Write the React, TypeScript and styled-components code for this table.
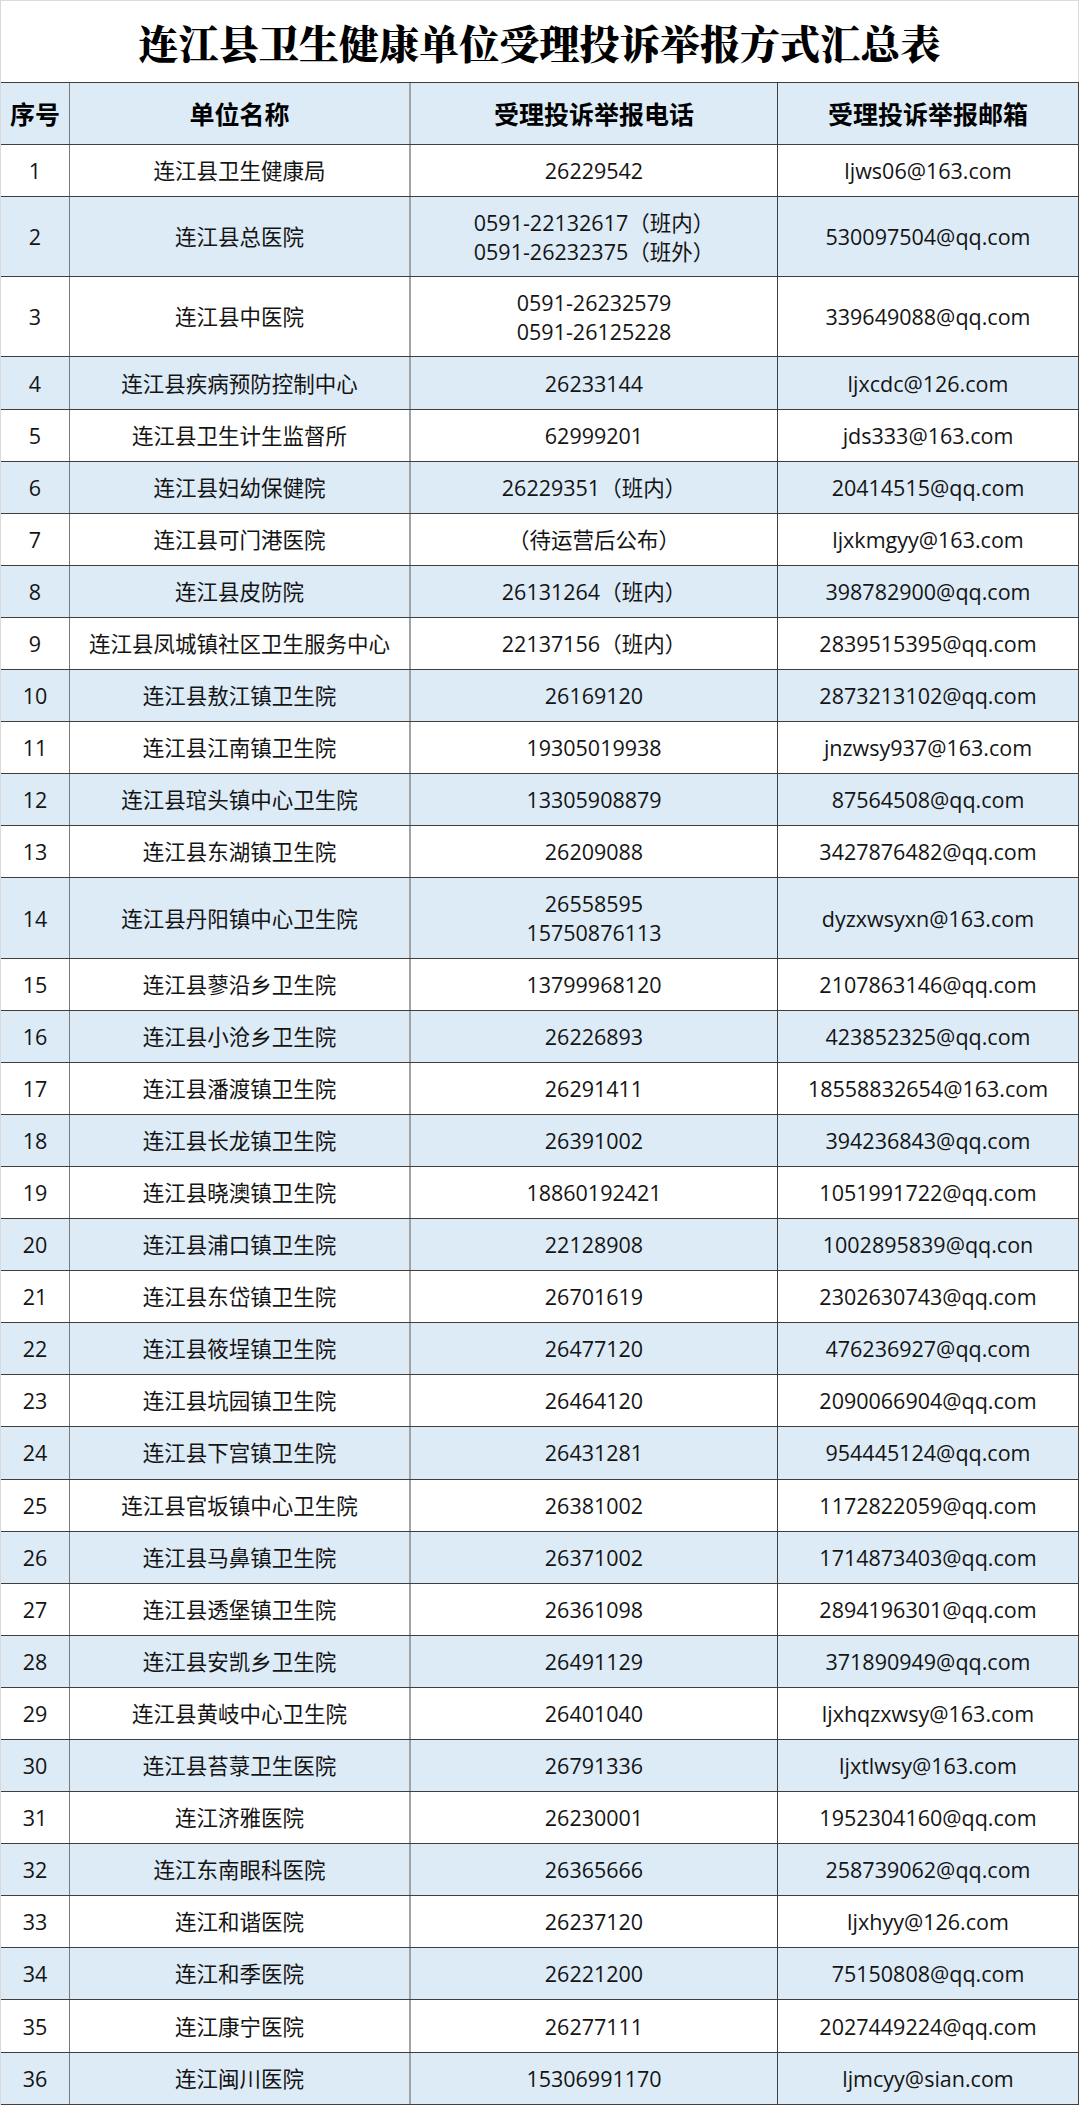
import React from "react";
import styled, { createGlobalStyle } from "styled-components";

const GlobalStyle = createGlobalStyle`
  html, body {
    margin: 0;
    padding: 0;
    background: #ffffff;
  }
  body {
    font-family: "Open Sans", "Noto Sans CJK SC", sans-serif;
  }
`;

type Entry = {
  no: number;
  name: string;
  phones: string[];
  email: string;
};

const data: Entry[] = [
  { no: 1, name: "连江县卫生健康局", phones: ["26229542"], email: "ljws06@163.com" },
  { no: 2, name: "连江县总医院", phones: ["0591-22132617（班内）", "0591-26232375（班外）"], email: "530097504@qq.com" },
  { no: 3, name: "连江县中医院", phones: ["0591-26232579", "0591-26125228"], email: "339649088@qq.com" },
  { no: 4, name: "连江县疾病预防控制中心", phones: ["26233144"], email: "ljxcdc@126.com" },
  { no: 5, name: "连江县卫生计生监督所", phones: ["62999201"], email: "jds333@163.com" },
  { no: 6, name: "连江县妇幼保健院", phones: ["26229351（班内）"], email: "20414515@qq.com" },
  { no: 7, name: "连江县可门港医院", phones: ["（待运营后公布）"], email: "ljxkmgyy@163.com" },
  { no: 8, name: "连江县皮防院", phones: ["26131264（班内）"], email: "398782900@qq.com" },
  { no: 9, name: "连江县凤城镇社区卫生服务中心", phones: ["22137156（班内）"], email: "2839515395@qq.com" },
  { no: 10, name: "连江县敖江镇卫生院", phones: ["26169120"], email: "2873213102@qq.com" },
  { no: 11, name: "连江县江南镇卫生院", phones: ["19305019938"], email: "jnzwsy937@163.com" },
  { no: 12, name: "连江县琯头镇中心卫生院", phones: ["13305908879"], email: "87564508@qq.com" },
  { no: 13, name: "连江县东湖镇卫生院", phones: ["26209088"], email: "3427876482@qq.com" },
  { no: 14, name: "连江县丹阳镇中心卫生院", phones: ["26558595", "15750876113"], email: "dyzxwsyxn@163.com" },
  { no: 15, name: "连江县蓼沿乡卫生院", phones: ["13799968120"], email: "2107863146@qq.com" },
  { no: 16, name: "连江县小沧乡卫生院", phones: ["26226893"], email: "423852325@qq.com" },
  { no: 17, name: "连江县潘渡镇卫生院", phones: ["26291411"], email: "18558832654@163.com" },
  { no: 18, name: "连江县长龙镇卫生院", phones: ["26391002"], email: "394236843@qq.com" },
  { no: 19, name: "连江县晓澳镇卫生院", phones: ["18860192421"], email: "1051991722@qq.com" },
  { no: 20, name: "连江县浦口镇卫生院", phones: ["22128908"], email: "1002895839@qq.con" },
  { no: 21, name: "连江县东岱镇卫生院", phones: ["26701619"], email: "2302630743@qq.com" },
  { no: 22, name: "连江县筱埕镇卫生院", phones: ["26477120"], email: "476236927@qq.com" },
  { no: 23, name: "连江县坑园镇卫生院", phones: ["26464120"], email: "2090066904@qq.com" },
  { no: 24, name: "连江县下宫镇卫生院", phones: ["26431281"], email: "954445124@qq.com" },
  { no: 25, name: "连江县官坂镇中心卫生院", phones: ["26381002"], email: "1172822059@qq.com" },
  { no: 26, name: "连江县马鼻镇卫生院", phones: ["26371002"], email: "1714873403@qq.com" },
  { no: 27, name: "连江县透堡镇卫生院", phones: ["26361098"], email: "2894196301@qq.com" },
  { no: 28, name: "连江县安凯乡卫生院", phones: ["26491129"], email: "371890949@qq.com" },
  { no: 29, name: "连江县黄岐中心卫生院", phones: ["26401040"], email: "ljxhqzxwsy@163.com" },
  { no: 30, name: "连江县苔菉卫生医院", phones: ["26791336"], email: "ljxtlwsy@163.com" },
  { no: 31, name: "连江济雅医院", phones: ["26230001"], email: "1952304160@qq.com" },
  { no: 32, name: "连江东南眼科医院", phones: ["26365666"], email: "258739062@qq.com" },
  { no: 33, name: "连江和谐医院", phones: ["26237120"], email: "ljxhyy@126.com" },
  { no: 34, name: "连江和季医院", phones: ["26221200"], email: "75150808@qq.com" },
  { no: 35, name: "连江康宁医院", phones: ["26277111"], email: "2027449224@qq.com" },
  { no: 36, name: "连江闽川医院", phones: ["15306991170"], email: "ljmcyy@sian.com" },
];

const Page = styled.div`
  width: 1079px;
  border-left: 1px solid #d9d9d9;
  box-sizing: border-box;
  background: #ffffff;
`;

const Title = styled.h1`
  margin: 0;
  height: 82px;
  box-sizing: border-box;
  border-top: 1px solid #dcdcdc;
  border-right: 1px solid #dcdcdc;
  display: flex;
  align-items: center;
  justify-content: center;
  font-family: "Noto Serif CJK SC", "Noto Serif SC", "Noto Sans CJK SC", serif;
  font-weight: 900;
  font-size: 40px;
  letter-spacing: 0.1px;
  color: #000000;
`;

const Table = styled.div`
  display: flex;
  flex-direction: column;
  border-top: 1px solid #3f3f3f;
`;

const Row = styled.div<{ $shade: boolean; $h: number }>`
  display: grid;
  grid-template-columns: 69px 341px 367px 301px;
  height: ${(p) => p.$h}px;
  box-sizing: border-box;
  border-bottom: 1px solid #3f3f3f;
  background: ${(p) => (p.$shade ? "#ddebf7" : "#ffffff")};
`;

const Cell = styled.div<{ $edge: "a" | "b" | "c" | "d" }>`
  display: flex;
  flex-direction: column;
  align-items: center;
  justify-content: center;
  text-align: center;
  box-sizing: border-box;
  min-width: 0;
  white-space: nowrap;
  border-right: ${(p) =>
    p.$edge === "a"
      ? "1px solid #7a7a7a"
      : p.$edge === "b"
      ? "2px solid #a3a3a3"
      : "1px solid #3f3f3f"};
  font-family: "Open Sans", "Noto Sans CJK SC", sans-serif;
  font-size: 21.5px;
  line-height: 29px;
  color: #141414;
`;

const HeadCell = styled(Cell)`
  font-family: "Noto Sans CJK SC", sans-serif;
  font-weight: 700;
  font-size: 25px;
  color: #000000;
`;

const Line = styled.span`
  display: block;
`;

export default function App() {
  return (
    <>
      <GlobalStyle />
      <Page>
        <Title>连江县卫生健康单位受理投诉举报方式汇总表</Title>
        <Table>
          <Row $shade={true} $h={62}>
            <HeadCell $edge="a">序号</HeadCell>
            <HeadCell $edge="b">单位名称</HeadCell>
            <HeadCell $edge="c">受理投诉举报电话</HeadCell>
            <HeadCell $edge="d">受理投诉举报邮箱</HeadCell>
          </Row>
          {data.map((e) => (
            <Row key={e.no} $shade={e.no % 2 === 0} $h={e.phones.length > 1 ? 80.2 : 52.1}>
              <Cell $edge="a">{e.no}</Cell>
              <Cell $edge="b">{e.name}</Cell>
              <Cell $edge="c">
                {e.phones.map((p) => (
                  <Line key={p}>{p}</Line>
                ))}
              </Cell>
              <Cell $edge="d">{e.email}</Cell>
            </Row>
          ))}
        </Table>
      </Page>
    </>
  );
}
